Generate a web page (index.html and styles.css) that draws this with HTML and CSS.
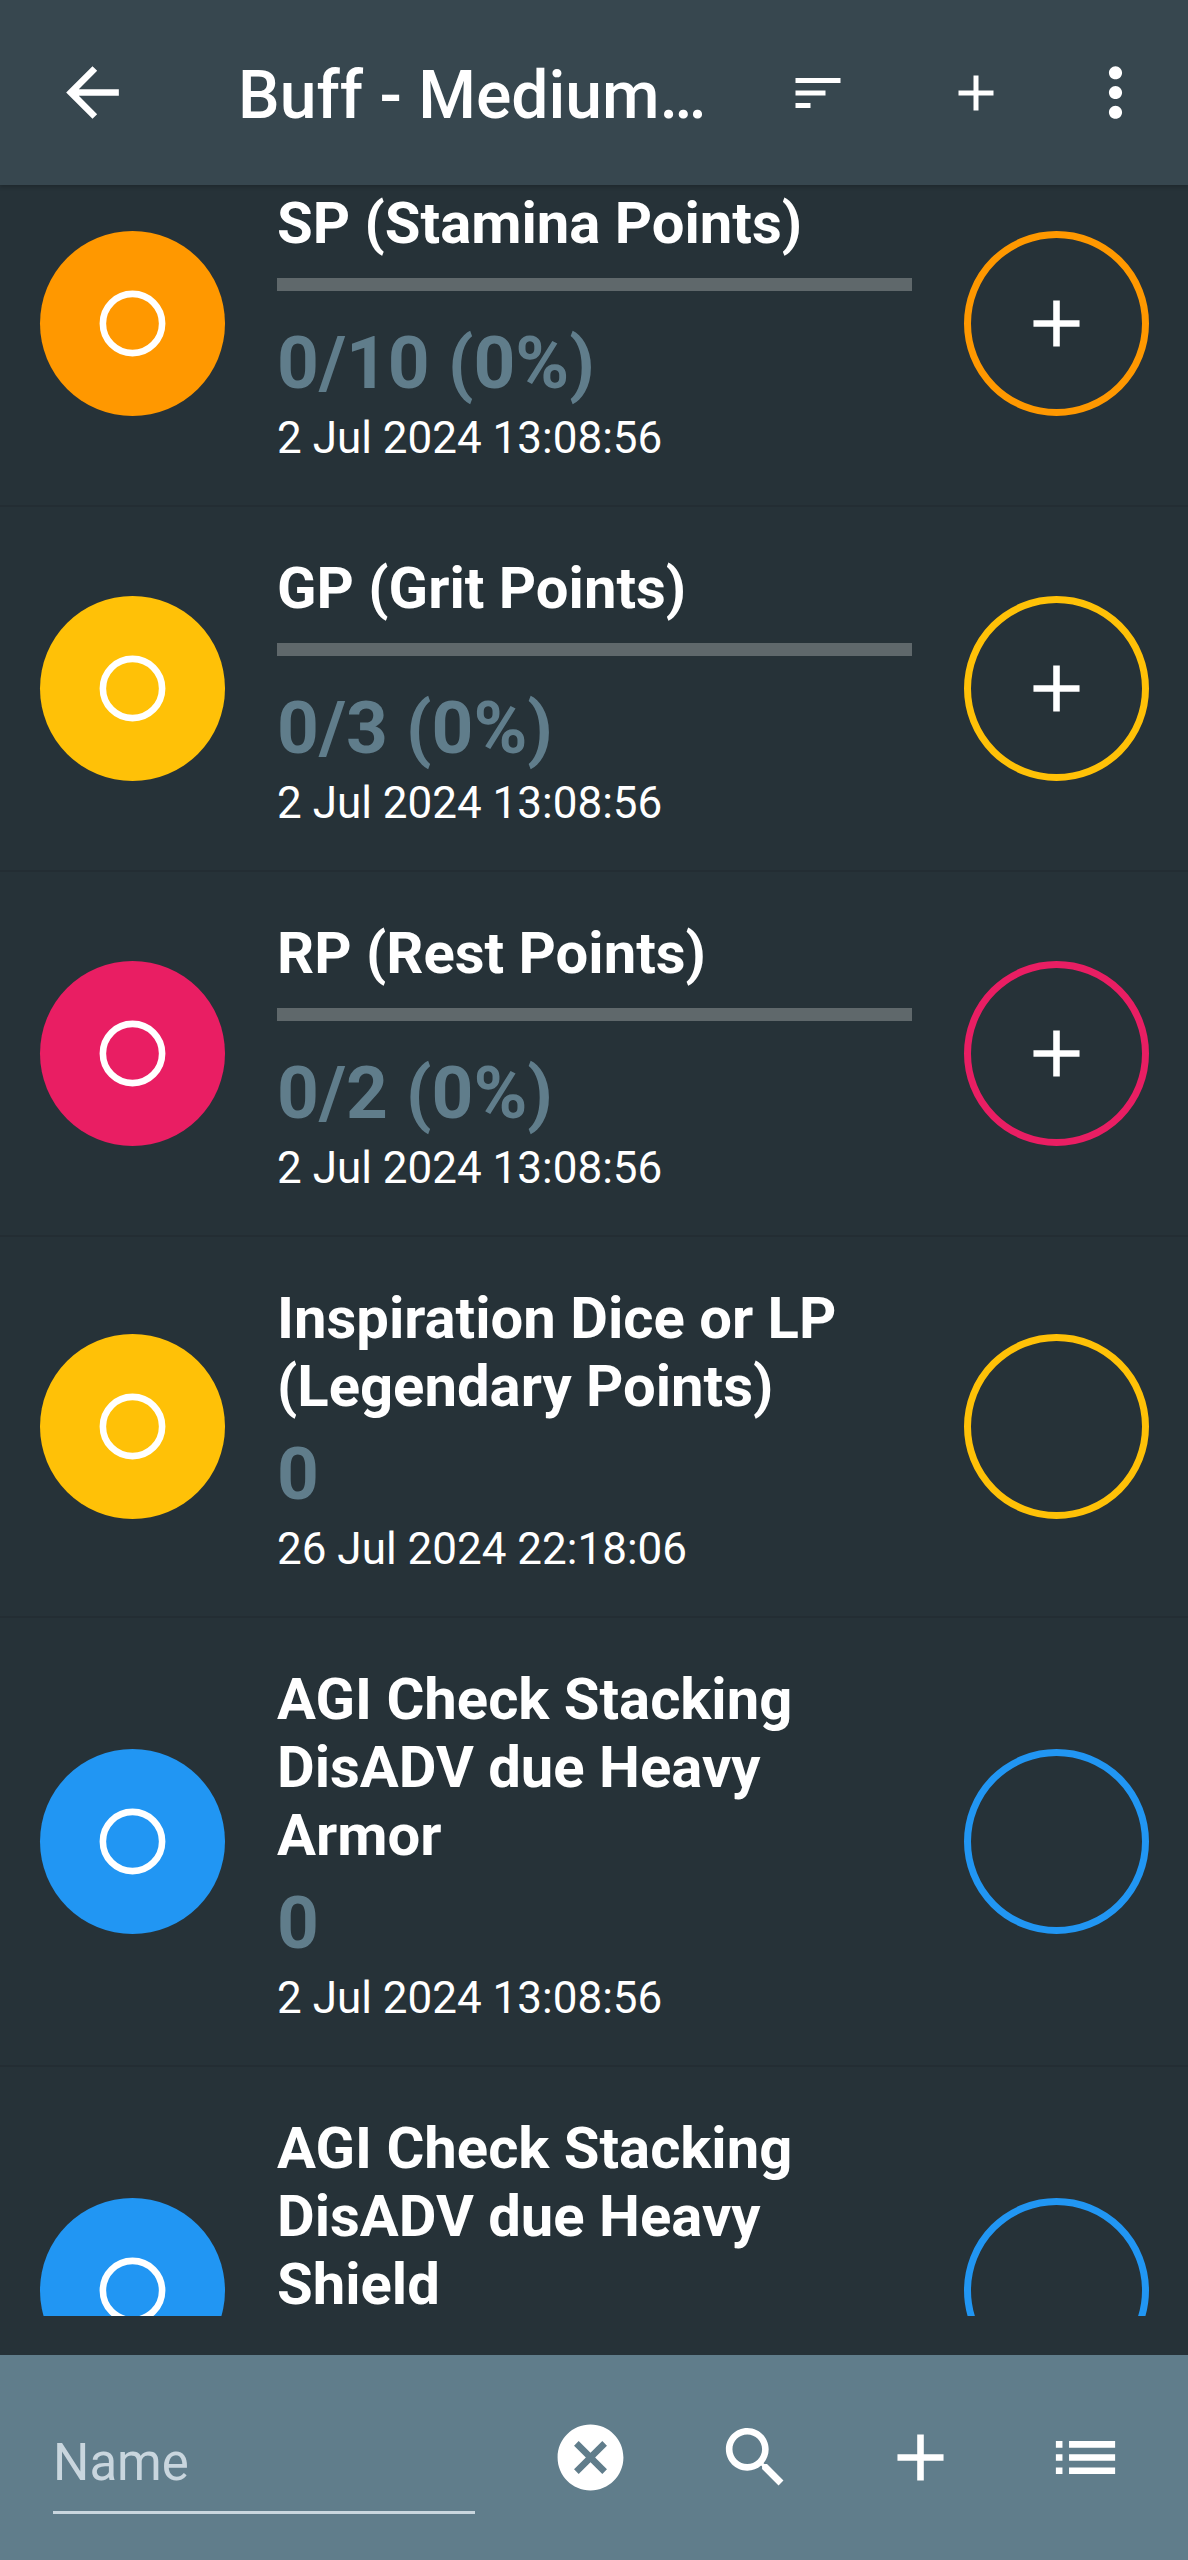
FILE: index.html
```html
<!DOCTYPE html>
<html lang="en">
<head>
<meta charset="utf-8">
<meta name="viewport" content="width=device-width, initial-scale=1">
<title>Buff - Medium</title>
<link rel="stylesheet" href="styles.css">
</head>
<body>
<svg class="sprite" aria-hidden="true">
  <symbol id="ring" viewBox="0 0 24 24"><circle cx="12" cy="12" r="9" fill="none" stroke="currentColor" stroke-width="2"/></symbol>
  <symbol id="plus" viewBox="0 0 24 24"><path d="M19 13h-6v6h-2v-6H5v-2h6V5h2v6h6v2z"/></symbol>
</svg>
<div class="app">
  <header class="topbar">
    <button class="icon-btn back" aria-label="Back"><svg class="icon" viewBox="0 0 24 24"><path d="M20 11H7.83l5.59-5.59L12 4l-8 8 8 8 1.41-1.41L7.83 13H20v-2z"/></svg></button>
    <h1 class="heading">Buff - Medium…</h1>
    <button class="icon-btn action" aria-label="Sort"><svg class="icon small" viewBox="0 0 24 24"><path d="M3 18h6v-2H3v2zM3 6v2h18V6H3zm0 7h12v-2H3v2z"/></svg></button>
    <button class="icon-btn action" aria-label="Add"><svg class="icon small"><use href="#plus"/></svg></button>
    <button class="icon-btn more" aria-label="More options"><svg class="icon" viewBox="0 0 24 24"><path d="M12 8c1.1 0 2-.9 2-2s-.9-2-2-2-2 .9-2 2 .9 2 2 2zm0 2c-1.1 0-2 .9-2 2s.9 2 2 2 2-.9 2-2-.9-2-2-2zm0 6c-1.1 0-2 .9-2 2s.9 2 2 2 2-.9 2-2-.9-2-2-2z"/></svg></button>
  </header>

  <main class="viewport">
    <ul class="counters">
      <li class="counter orange">
        <button class="round filled" aria-label="Reset SP"><svg class="icon"><use href="#ring"/></svg></button>
        <div class="info">
          <h2 class="name">SP (Stamina Points)</h2>
          <progress class="bar" value="0" max="10" aria-label="SP"></progress>
          <p class="value">0/10 (0%)</p>
          <p class="date">2 Jul 2024 13:08:56</p>
        </div>
        <button class="round outlined" aria-label="Increase SP"><svg class="icon"><use href="#plus"/></svg></button>
      </li>
      <li class="counter amber">
        <button class="round filled" aria-label="Reset GP"><svg class="icon"><use href="#ring"/></svg></button>
        <div class="info">
          <h2 class="name">GP (Grit Points)</h2>
          <progress class="bar" value="0" max="3" aria-label="GP"></progress>
          <p class="value">0/3 (0%)</p>
          <p class="date">2 Jul 2024 13:08:56</p>
        </div>
        <button class="round outlined" aria-label="Increase GP"><svg class="icon"><use href="#plus"/></svg></button>
      </li>
      <li class="counter pink">
        <button class="round filled" aria-label="Reset RP"><svg class="icon"><use href="#ring"/></svg></button>
        <div class="info">
          <h2 class="name">RP (Rest Points)</h2>
          <progress class="bar" value="0" max="2" aria-label="RP"></progress>
          <p class="value">0/2 (0%)</p>
          <p class="date">2 Jul 2024 13:08:56</p>
        </div>
        <button class="round outlined" aria-label="Increase RP"><svg class="icon"><use href="#plus"/></svg></button>
      </li>
      <li class="counter amber">
        <button class="round filled" aria-label="Reset LP"><svg class="icon"><use href="#ring"/></svg></button>
        <div class="info">
          <h2 class="name">Inspiration Dice or LP (Legendary Points)</h2>
          <p class="value">0</p>
          <p class="date">26 Jul 2024 22:18:06</p>
        </div>
        <button class="round outlined" aria-label="Change LP"></button>
      </li>
      <li class="counter blue tall">
        <button class="round filled" aria-label="Reset armor stacking"><svg class="icon"><use href="#ring"/></svg></button>
        <div class="info">
          <h2 class="name">AGI Check Stacking DisADV due Heavy Armor</h2>
          <p class="value">0</p>
          <p class="date">2 Jul 2024 13:08:56</p>
        </div>
        <button class="round outlined" aria-label="Change armor stacking"></button>
      </li>
      <li class="counter blue tall">
        <button class="round filled" aria-label="Reset shield stacking"><svg class="icon"><use href="#ring"/></svg></button>
        <div class="info">
          <h2 class="name">AGI Check Stacking DisADV due Heavy Shield</h2>
        </div>
        <button class="round outlined" aria-label="Change shield stacking"></button>
      </li>
    </ul>
  </main>

  <footer class="bottombar">
    <input class="name-input" type="text" placeholder="Name" aria-label="Name">
    <button class="icon-btn tool" aria-label="Clear"><svg class="icon" viewBox="0 0 24 24"><path d="M12 2C6.47 2 2 6.47 2 12s4.47 10 10 10 10-4.47 10-10S17.53 2 12 2zm5 13.59L15.59 17 12 13.41 8.41 17 7 15.59 10.59 12 7 8.41 8.41 7 12 10.59 15.59 7 17 8.41 13.41 12 17 15.59z"/></svg></button>
    <button class="icon-btn tool" aria-label="Search"><svg class="icon" viewBox="0 0 24 24"><path d="M15.5 14h-.79l-.28-.27C15.41 12.59 16 11.11 16 9.5 16 5.91 13.09 3 9.5 3S3 5.91 3 9.5 5.91 16 9.5 16c1.61 0 3.09-.59 4.23-1.57l.27.28v.79l5 4.99L20.49 19l-4.99-5zm-6 0C7.01 14 5 11.99 5 9.5S7.01 5 9.5 5 14 7.01 14 9.5 11.99 14 9.5 14z"/></svg></button>
    <button class="icon-btn tool" aria-label="Add counter"><svg class="icon"><use href="#plus"/></svg></button>
    <button class="icon-btn tool" aria-label="List"><svg class="icon" viewBox="0 0 24 24"><path d="M3 13h2v-2H3v2zm0 4h2v-2H3v2zm0-8h2V7H3v2zm4 4h14v-2H7v2zm0 4h14v-2H7v2zM7 7v2h14V7H7z"/></svg></button>
  </footer>
</div>
</body>
</html>
```
FILE: styles.css
```css
* {
  box-sizing: border-box;
  margin: 0;
  padding: 0;
}

body {
  background: #263238;
  color: #fff;
  font-family: Roboto, "Liberation Sans", sans-serif;
}

button {
  border: 0;
  background: none;
  color: inherit;
  cursor: pointer;
}

.sprite {
  display: none;
}

.app {
  display: flex;
  flex-direction: column;
  height: 100vh;
}

.icon {
  display: block;
  width: 79px;
  height: 79px;
  fill: currentColor;
}

.icon.small {
  width: 60px;
  height: 60px;
}

.icon-btn {
  display: flex;
  flex: none;
  align-items: center;
  justify-content: center;
}

/* Top app bar */

.topbar {
  display: flex;
  flex: none;
  align-items: center;
  height: 185px;
  padding: 0 13px 0 0;
  background: #37474f;
  box-shadow: 0 2px 4px rgba(0, 0, 0, 0.2);
  z-index: 1;
}

.back {
  width: 185px;
  height: 185px;
  margin-right: 53px;
}

.heading {
  flex: 1;
  min-width: 0;
  padding-top: 6px;
  overflow: hidden;
  font-size: 66px;
  font-weight: 500;
  line-height: 78px;
  text-overflow: ellipsis;
  white-space: nowrap;
}

.action {
  width: 158px;
  height: 158px;
}

.more {
  width: 120px;
  height: 158px;
}

/* Counter list */

.viewport {
  flex: 1;
  min-height: 0;
  margin-bottom: 39px;
  overflow: hidden;
}

/* The list is scrolled a little past its first row's top edge */
.counters {
  margin-top: -43px;
  list-style: none;
}

.counter {
  display: flex;
  gap: 52px;
  align-items: center;
  padding: 0 39px 0 40px;
  border-bottom: 2px solid #232d33;
}

.orange { --accent: #ff9800; }
.amber { --accent: #ffc107; }
.pink { --accent: #e91e63; }
.blue { --accent: #2196f3; }

.round {
  display: flex;
  flex: none;
  align-items: center;
  justify-content: center;
  width: 185px;
  height: 185px;
  border-radius: 50%;
}

.filled {
  background: var(--accent);
}

.outlined {
  border: 7px solid var(--accent);
}

.info {
  flex: 1;
  min-width: 0;
  padding: 47px 0 40px;
}

/* Rows with a three-line name */
.tall .info {
  min-height: 447px;
}

.name {
  font-size: 58px;
  font-weight: 700;
  line-height: 68px;
}

.bar {
  display: block;
  width: 100%;
  height: 13px;
  margin: 21px 0 30px;
  border: 0;
  background: #5f686b;
  appearance: none;
}

.bar::-webkit-progress-bar {
  background: #5f686b;
}

.bar::-webkit-progress-value {
  background: var(--accent);
}

.name + .value {
  margin-top: 12px;
}

.value {
  margin-bottom: 7px;
  color: #607d8b;
  font-size: 73px;
  font-weight: 700;
  line-height: 84px;
}

.date {
  font-size: 44px;
  line-height: 53px;
}

/* Bottom bar */

.bottombar {
  display: flex;
  flex: none;
  align-items: center;
  height: 205px;
  padding: 0 20px 0 53px;
  background: #607d8b;
}

.name-input {
  flex: 1;
  min-width: 0;
  height: 112px;
  margin-right: 33px;
  padding-top: 12px;
  border: 0;
  border-bottom: 3px solid #c9d6de;
  border-radius: 0;
  outline: 0;
  background: none;
  color: #fff;
  font: 400 51px Roboto, "Liberation Sans", sans-serif;
}

.name-input::placeholder {
  color: #c9d6de;
  opacity: 1;
}

.tool {
  width: 165px;
  height: 165px;
}
```
